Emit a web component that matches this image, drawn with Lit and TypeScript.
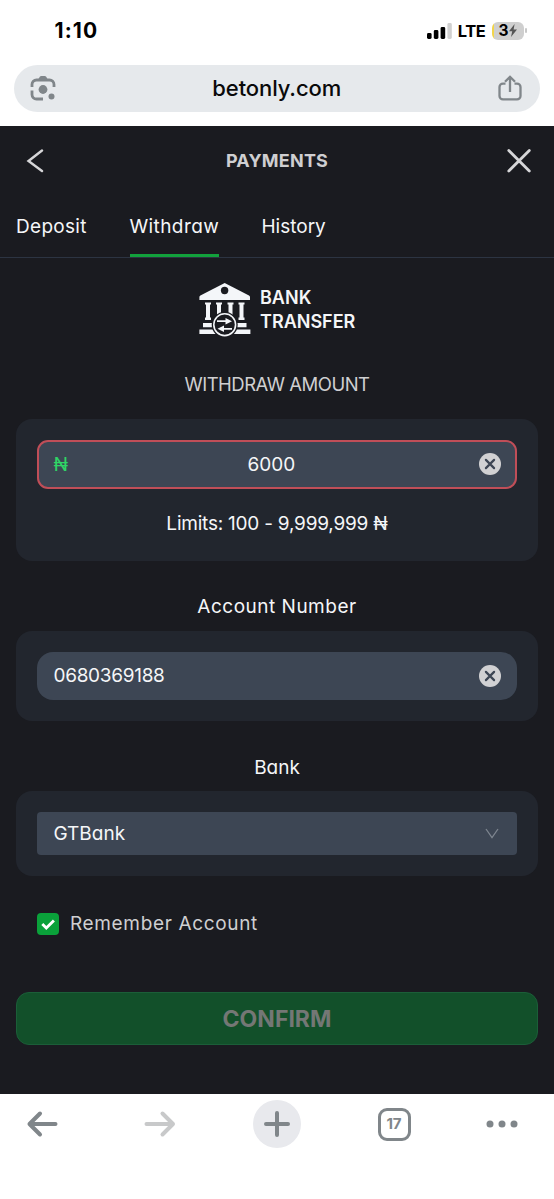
import { LitElement, html, css, svg } from "lit";
import { customElement } from "lit/decorators.js";

const clearIcon = html`<svg class="clear" width="22" height="22" viewBox="0 0 22 22">
  <circle cx="11" cy="11" r="11" fill="#d1d1d3" />
  <path d="M6.9 6.9l8.2 8.2M15.1 6.9l-8.2 8.2" stroke="#3d4654" stroke-width="2.2" stroke-linecap="round" />
</svg>`;

const column = (x: number) => svg`<path d="M${x} 19.5h6v2h-1v13h1v2.5h-6v-2.5h1v-13h-1z" fill="#f4f6f9" />`;

@customElement("app-root")
export class AppRoot extends LitElement {
  static styles = css`
    :host {
      display: flex;
      flex-direction: column;
      width: 554px;
      height: 1199px;
      overflow: hidden;
      background: #fff;
      color: #f5f6f8;
      font-family: Inter, "Liberation Sans", sans-serif;
      font-size: 19px;
      line-height: 28px;
      white-space: nowrap;
    }
    * { box-sizing: border-box; }
    svg { display: block; flex: none; }
    .status {
      height: 64.5px;
      padding: 0 30.5px 3px 54.5px;
      display: flex;
      align-items: center;
      justify-content: space-between;
      color: #000;
    }
    .time { font-size: 21px; font-weight: 700; letter-spacing: 1.1px; }
    .signals { display: flex; align-items: center; }
    .lte { font-size: 16.5px; font-weight: 650; margin: 0 6px 0 6px; letter-spacing: -0.4px; }
    .battery {
      width: 32px;
      height: 18px;
      border-radius: 6px;
      background: linear-gradient(90deg, #f2d54a 2px, #cfcfcf 2px);
      display: flex;
      align-items: center;
      justify-content: center;
      font-size: 15.5px;
      font-weight: 700;
    }
    .nub { width: 1.5px; height: 5px; margin: 0 -3px 0 1.5px; border-radius: 1px; background: #c8c8c8; }
    .address {
      height: 47.5px;
      margin: 0 14px;
      padding: 0 18px 0 15.5px;
      border-radius: 24px;
      background: #e6e9ec;
      display: flex;
      align-items: center;
      justify-content: space-between;
      color: #0a0a0a;
    }
    .domain { font-size: 22px; font-weight: 540; letter-spacing: -0.1px; margin-top: -1px; }
    .page {
      margin-top: 14px;
      height: 968px;
      background: #1a1b20;
      display: flex;
      flex-direction: column;
      font-feature-settings: "cv11";
    }
    .header {
      height: 70px;
      padding: 0 22px 0 26px;
      display: grid;
      grid-template-columns: 100px 1fr 104px;
      align-items: center;
      color: #cfcfd1;
    }
    .heading { font-size: 18px; font-weight: 700; letter-spacing: 0.2px; text-align: center; }
    .close { justify-self: end; }
    .tabs {
      height: 62px;
      padding: 0 16px;
      display: flex;
      gap: 42.5px;
      border-bottom: 1px solid #2c3442;
    }
    .tab { padding-top: 17px; height: 61px; border-bottom: 3px solid transparent; }
    .tab.active { border-color: #12a13c; }
    .deposit { width: 71px; letter-spacing: 0.3px; }
    .withdraw { width: 89.5px; letter-spacing: 0.4px; }
    .bank {
      height: 78px;
      padding: 25px 0 0 199px;
      display: flex;
      gap: 9px;
    }
    .bankname { font-size: 18px; font-weight: 600; line-height: 24px; padding-top: 3px; }
    .title {
      height: 83px;
      padding-top: 34px;
      text-align: center;
      color: #cfcfd1;
      font-size: 18.5px;
      letter-spacing: -0.5px;
    }
    .card { margin: 0 16px; padding: 21px; border-radius: 16px; background: #22262e; }
    .amount { height: 141.5px; }
    .account { height: 90.5px; }
    .bankcard { height: 85px; }
    .field {
      height: 48px;
      padding: 0 16px 0 16.5px;
      border-radius: 16px;
      background: #3d4654;
      display: flex;
      align-items: center;
      justify-content: space-between;
    }
    .field.error {
      height: 48.5px;
      border: 2px solid #c04e58;
      border-radius: 11px;
      padding: 0 14px 0 14.5px;
    }
    .field.select { height: 43px; border-radius: 4px; padding-right: 18px; }
    .naira { width: 10px; color: #2fd566; padding-top: 1px; }
    .value { padding-top: 1px; }
    .limits { text-align: center; padding-top: 21.5px; letter-spacing: -0.22px; }
    .number { letter-spacing: -0.3px; padding-top: 1px; }
    .label { text-align: center; height: 70px; padding-top: 33px; }
    .label.wide { letter-spacing: 0.5px; padding-top: 32px; }
    .remember {
      height: 115.5px;
      padding: 36.5px 0 0 37px;
      display: flex;
      align-items: flex-start;
      gap: 11px;
      color: #cfcfd1;
      letter-spacing: 0.65px;
    }
    .remember span { margin-top: -3px; }
    .confirm {
      height: 53.5px;
      margin: 0 16px;
      padding-top: 1.5px;
      border: 1px solid #1b5e38;
      border-radius: 13px;
      background: #12502a;
      color: #747775;
      font-size: 23px;
      font-weight: 700;
      display: flex;
      align-items: center;
      justify-content: center;
    }
    .toolbar {
      height: 60px;
      display: grid;
      grid-template-columns: 84px 151px 84px 150px 65px;
      align-items: center;
      justify-items: center;
    }
    .plus {
      width: 48px;
      height: 48px;
      border-radius: 50%;
      background: #e8e9ed;
      display: flex;
      align-items: center;
      justify-content: center;
    }
    .count {
      width: 33px;
      height: 33px;
      border: 3px solid #80868a;
      border-radius: 9px;
      color: #80868a;
      font-size: 15px;
      font-weight: 700;
      display: flex;
      align-items: center;
      justify-content: center;
    }
  `;

  render() {
    return html`
      <div class="status">
        <span class="time">1:10</span>
        <div class="signals">
          <svg width="25" height="16" viewBox="0 0 25 16">
            <rect x="0" y="10" width="4.6" height="6" rx="1.4" />
            <rect x="6.8" y="7" width="4.6" height="9" rx="1.4" />
            <rect x="13.6" y="4" width="4.6" height="12" rx="1.4" />
            <rect x="20.4" y="0" width="4.4" height="16" rx="1.4" fill="#d0d0d0" />
          </svg>
          <span class="lte">LTE</span>
          <span class="battery">3<svg width="8" height="13" viewBox="0 0 8 13"><path d="M5.6 0L0 7.2h3.2L2 13l6-7.4H4.6z" fill="#555" /></svg></span>
          <span class="nub"></span>
        </div>
      </div>
      <div class="address">
        <svg width="26" height="26" viewBox="0 0 26 26">
          <g fill="none" stroke="#80868a" stroke-width="2.800">
            <path d="M2 12V9.500a4.500 4.500 0 0 1 4.500-4.500h13a4.500 4.500 0 0 1 4.500 4.500V12" />
            <path d="M2 15.500v4a4.500 4.500 0 0 0 4.500 4.500H13" />
          </g>
          <path d="M8 5l1.600-3q.6-1 1.800-1h3.200q1.200 0 1.800 1L18 5z" fill="#80868a" />
          <circle cx="13" cy="14.500" r="4.400" fill="#80868a" />
          <circle cx="21.500" cy="21.500" r="3" fill="#80868a" />
        </svg>
        <span class="domain">betonly.com</span>
        <svg width="24" height="26" viewBox="0 0 24 26" fill="none" stroke="#80868a" stroke-width="2.300">
          <path d="M7.500 8.600H5a3.500 3.500 0 0 0-3.500 3.500v8.800A3.500 3.500 0 0 0 5 24.400h14a3.500 3.500 0 0 0 3.500-3.500v-8.800A3.500 3.500 0 0 0 19 8.600h-2.500" />
          <path d="M12 17V2.500M7 6.800l5-5 5 5" />
        </svg>
      </div>
      <div class="page">
        <div class="header">
          <svg width="18" height="24" viewBox="0 0 18 24" fill="none" stroke="#d6d6d8" stroke-width="2.400" stroke-linecap="round">
            <path d="M16 1.500L2.500 12 16 22" />
          </svg>
          <span class="heading">PAYMENTS</span>
          <svg class="close" width="26" height="26" viewBox="0 0 26 26" stroke="#d6d6d8" stroke-width="2.800" stroke-linecap="round">
            <path d="M2.800 2.500l20.500 20.500M23.300 2.500L2.800 23" />
          </svg>
        </div>
        <div class="tabs">
          <span class="tab deposit">Deposit</span>
          <span class="tab active withdraw">Withdraw</span>
          <span class="tab">History</span>
        </div>
        <div class="bank">
          <svg width="52" height="54" viewBox="0 0 52 54">
            <path d="M25.700 0L50 12.500q1 .6 1 1.600v3H.4v-3q0-1 1-1.600z" fill="#f4f6f9" />
            <circle cx="25.600" cy="7.500" r="3.700" fill="#1a1b20" />
            ${[6, 17, 28.5, 39.5].map(column)}
            <path d="M4 40h43.500v4.200H4zM.4 46.500h51V51H.4z" fill="#f4f6f9" />
            <circle cx="25.700" cy="41.700" r="13" fill="#1a1b20" />
            <circle cx="25.700" cy="41.700" r="10.900" fill="#1a1b20" stroke="#f4f6f9" stroke-width="1.600" />
            <path d="M18 38.200h9M33 45.800h-9" stroke="#f4f6f9" stroke-width="1.700" />
            <path d="M26.500 35l6.500 3.200-6.500 3.200zM25 42.600l-6.500 3.200 6.500 3.200z" fill="#f4f6f9" />
          </svg>
          <div class="bankname"><div>BANK</div><div>TRANSFER</div></div>
        </div>
        <div class="title">WITHDRAW AMOUNT</div>
        <div class="card amount">
          <div class="field error">
            <span class="naira">₦</span><span class="value">6000</span>${clearIcon}
          </div>
          <div class="limits">Limits: 100 - 9,999,999 ₦</div>
        </div>
        <div class="label wide">Account Number</div>
        <div class="card account">
          <div class="field"><span class="number">0680369188</span>${clearIcon}</div>
        </div>
        <div class="label">Bank</div>
        <div class="card bankcard">
          <div class="field select">
            <span>GTBank</span>
            <svg width="14" height="11" viewBox="0 0 14 11" fill="none" stroke="#7d858f" stroke-width="1.300">
              <path d="M1 1l6 8.500L13 1" />
            </svg>
          </div>
        </div>
        <div class="remember">
          <svg width="22" height="22" viewBox="0 0 22 22">
            <rect width="22" height="22" rx="4" fill="#0aa13a" />
            <path d="M5.300 11l4 4 7.600-7.600" fill="none" stroke="#fff" stroke-width="2.800" />
          </svg>
          <span>Remember Account</span>
        </div>
        <div class="confirm"><span>CONFIRM</span></div>
      </div>
      <div class="toolbar">
        <svg width="32" height="28" viewBox="0 0 32 28" fill="none" stroke="#80868a" stroke-width="4" stroke-linecap="round" stroke-linejoin="round">
          <path d="M29.500 14H3.500M14 3.500L3.500 14 14 24.500" />
        </svg>
        <svg width="32" height="28" viewBox="0 0 32 28" fill="none" stroke="#c8c9ca" stroke-width="4" stroke-linecap="round" stroke-linejoin="round">
          <path d="M2.500 14h26.500M18.500 3.500L29 14 18.500 24.500" />
        </svg>
        <div class="plus">
          <svg width="26" height="26" viewBox="0 0 26 26" stroke="#80868a" stroke-width="4" stroke-linecap="round">
            <path d="M13 2v22M2 13h22" />
          </svg>
        </div>
        <div class="count">17</div>
        <svg width="32" height="8" viewBox="0 0 32 8" fill="#80868a">
          <circle cx="4" cy="4" r="3.500" /><circle cx="16" cy="4" r="3.500" /><circle cx="28" cy="4" r="3.500" />
        </svg>
      </div>
    `;
  }
}
